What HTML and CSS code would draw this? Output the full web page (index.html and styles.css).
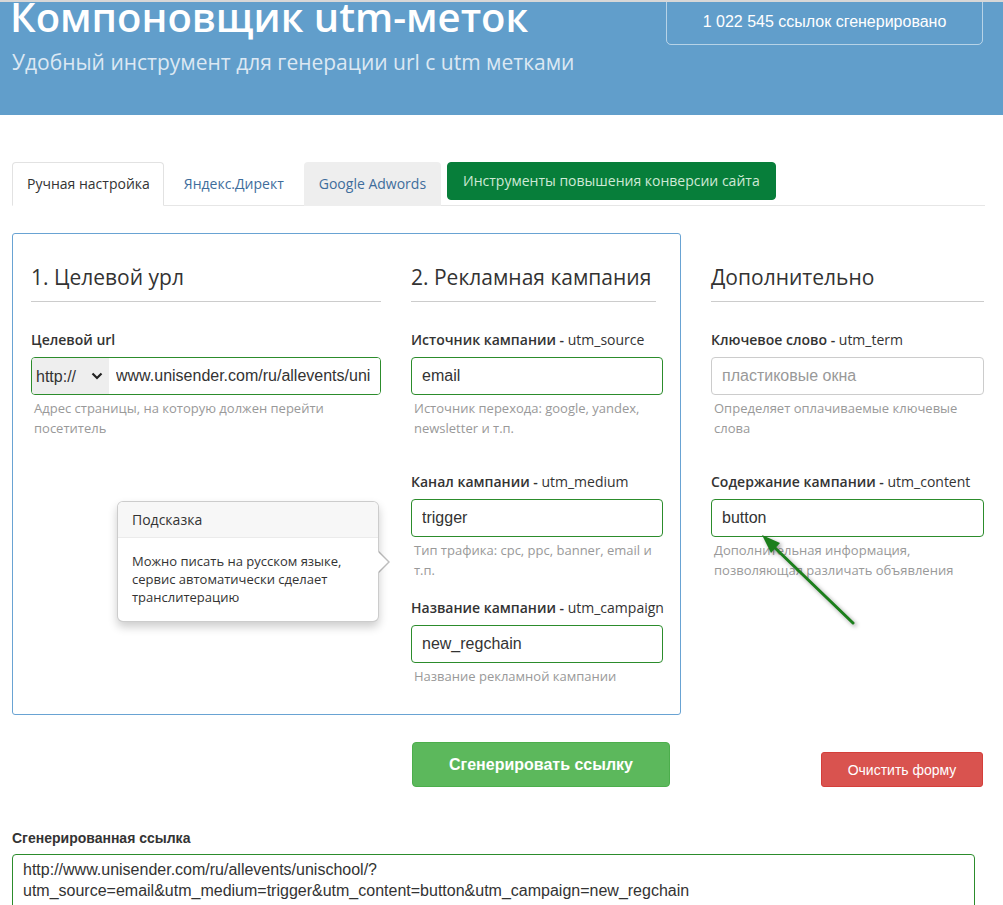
FILE: index.html
```html
<!DOCTYPE html>
<html lang="ru">
<head>
    <meta charset="UTF-8">
    <meta name="viewport" content="width=device-width, initial-scale=1.0">
    <title>Компоновщик utm-меток</title>
    <link rel="stylesheet" href="styles.css">
</head>
<body>
    <div class="topline"></div>
    <header class="hero">
        <div class="hero-text">
            <h1>Компоновщик utm-меток</h1>
            <p>Удобный инструмент для генерации url с utm метками</p>
        </div>
        <div class="counter">1 022 545 ссылок сгенерировано</div>
    </header>

    <div class="page">
        <div class="tabs">
            <a class="tab active">Ручная настройка</a>
            <a class="tab wide">Яндекс.Директ</a>
            <a class="tab muted">Google Adwords</a>
            <a class="tab-promo">Инструменты повышения конверсии сайта</a>
        </div>

        <div class="workspace">
            <div class="panel">
                <div class="col-main">
                    <h2 class="section-title">1. Целевой урл</h2>
                    <div class="field">
                        <label>Целевой url</label>
                        <div class="url-group">
                            <select class="proto">
                                <option>http://</option>
                                <option>https://</option>
                            </select>
                            <svg class="chevron" width="12" height="8" viewBox="0 0 12 8"><polyline points="1.5,1.5 6,6 10.5,1.5" fill="none" stroke="#222" stroke-width="2.2"/></svg>
                            <input type="text" class="url-input" value="www.unisender.com/ru/allevents/unischool/">
                        </div>
                        <div class="help">Адрес страницы, на которую должен перейти посетитель</div>
                    </div>
                </div>

                <div class="col-campaign">
                    <h2 class="section-title">2. Рекламная кампания</h2>
                    <div class="field field-tall">
                        <label>Источник кампании - <span class="key">utm_source</span></label>
                        <input type="text" class="input" value="email">
                        <div class="help">Источник перехода: google, yandex, newsletter и т.п.</div>
                    </div>
                    <div class="field">
                        <label>Канал кампании - <span class="key">utm_medium</span></label>
                        <input type="text" class="input" value="trigger">
                        <div class="help">Тип трафика: cpc, ppc, banner, email и т.п.</div>
                    </div>
                    <div class="field">
                        <label>Название кампании - <span class="key">utm_campaign</span></label>
                        <input type="text" class="input" value="new_regchain">
                        <div class="help">Название рекламной кампании</div>
                    </div>
                </div>

                <div class="popover">
                    <div class="popover-title">Подсказка</div>
                    <div class="popover-body">Можно писать на русском языке, сервис автоматически сделает транслитерацию</div>
                </div>
            </div>

            <div class="col-extra">
                <h2 class="section-title">Дополнительно</h2>
                <div class="field field-tall">
                    <label>Ключевое слово - <span class="key">utm_term</span></label>
                    <input type="text" class="input input-plain" placeholder="пластиковые окна">
                    <div class="help">Определяет оплачиваемые ключевые слова</div>
                </div>
                <div class="field">
                    <label>Содержание кампании - <span class="key">utm_content</span></label>
                    <input type="text" class="input" value="button">
                    <div class="help">Дополнительная информация, позволяющая различать объявления</div>
                </div>
            </div>
        </div>

        <div class="actions">
            <button class="btn-generate">Сгенерировать ссылку</button>
            <button class="btn-clear">Очистить форму</button>
        </div>

        <div class="result">
            <label>Сгенерированная ссылка</label>
            <textarea class="result-box">http://www.unisender.com/ru/allevents/unischool/?
utm_source=email&amp;utm_medium=trigger&amp;utm_content=button&amp;utm_campaign=new_regchain</textarea>
        </div>
    </div>

    <!-- annotation arrow -->
    <svg class="pointer" width="130" height="120" viewBox="0 0 130 120">
        <line x1="33" y1="26" x2="113" y2="103" stroke="#1c7f1c" stroke-width="3" stroke-linecap="round"/>
        <polygon points="22,15 40,23 31,33" fill="#1c7f1c"/>
    </svg>
</body>
</html>
```

FILE: styles.css
```css
body {
    margin: 0;
    font-family: "Open Sans", sans-serif;
    color: #333;
    position: relative;
}
.topline {
    height: 2px;
    background: #d7d7d7;
}
.hero {
    height: 113px;
    background: #619ecb;
    display: flex;
    justify-content: space-between;
    align-items: flex-start;
    overflow: hidden;
}
.hero-text {
    padding-left: 10px;
}
.hero h1 {
    margin: -9px 0 0;
    font-size: 40px;
    line-height: 48px;
    font-weight: 600;
    color: #fff;
}
.hero p {
    margin: 7px 0 0 2px;
    font-size: 21px;
    line-height: 28px;
    color: #dce8f3;
}
.counter {
    margin: -1px 20px 0 0;
    width: 315px;
    padding: 10px 0 12px;
    border: 1px solid rgba(255, 255, 255, 0.55);
    border-radius: 0 0 5px 5px;
    text-align: center;
    font-family: "Liberation Sans", Arial, sans-serif;
    font-size: 16px;
    line-height: 20px;
    color: #fff;
}
.page {
    padding: 47px 18px 0 12px;
}

/* tabs */
.tabs {
    display: flex;
    align-items: flex-start;
    border-bottom: 1px solid #e6e6e6;
    font-size: 14px;
}
.tab {
    padding: 11px 14px;
    line-height: 20px;
    margin: 0 1px -1px 0;
    border: 1px solid transparent;
    border-radius: 4px 4px 0 0;
    color: #3e6d9c;
    white-space: nowrap;
    cursor: pointer;
}
.tab.active {
    padding: 11px 13px 11px 14px;
    background: #fff;
    color: #333;
    border-color: #e2e2e2 #e2e2e2 #fff;
}
.tab.wide {
    padding: 11px 18px;
    margin-right: 1px;
}
.tab.muted {
    background: #eee;
    margin-right: 6px;
}
.tab-promo {
    padding: 8px 15px;
    line-height: 20px;
    border: 1px solid #077e3a;
    border-radius: 4px;
    background: #077e3a;
    color: #cfe9d6;
    white-space: nowrap;
    cursor: pointer;
}

/* form */
.workspace {
    display: flex;
    align-items: flex-start;
    margin-top: 27px;
}
.panel {
    position: relative;
    display: flex;
    padding: 28px 17px 28px 18px;
    border: 1px solid #69a3d3;
    border-radius: 3px;
}
.col-main {
    width: 350px;
}
.col-campaign {
    width: 252px;
    margin-left: 30px;
}
.col-campaign .section-title {
    margin-right: 7px;
}
.col-extra {
    width: 273px;
    margin-left: 30px;
    padding-top: 29px;
}
.section-title {
    margin: 0 0 28px;
    padding-bottom: 9px;
    border-bottom: 1px solid #ccc;
    font-size: 21px;
    line-height: 30px;
    font-weight: 400;
    white-space: nowrap;
}
.field {
    margin-bottom: 18px;
}
.field-tall {
    margin-bottom: 34px;
}
.field:last-child {
    margin-bottom: 0;
}
.field label {
    display: block;
    margin-bottom: 7px;
    font-size: 14px;
    line-height: 20px;
    font-weight: 600;
    white-space: nowrap;
}
.field .key {
    font-weight: 400;
}
.input {
    display: block;
    box-sizing: border-box;
    width: 100%;
    height: 38px;
    padding: 0 10px;
    border: 1px solid #2c8c2c;
    border-radius: 4px;
    font-family: "Liberation Sans", Arial, sans-serif;
    font-size: 16px;
    color: #333;
    outline: none;
}
.input-plain {
    border-color: #ccc;
}
.input-plain::placeholder {
    color: #999;
}
.url-group {
    position: relative;
    display: flex;
    box-sizing: border-box;
    height: 38px;
    border: 1px solid #2c8c2c;
    border-radius: 4px;
    overflow: hidden;
}
.proto {
    appearance: none;
    width: 77px;
    padding-left: 4px;
    border: 0;
    background: #eee;
    font-family: "Liberation Sans", Arial, sans-serif;
    font-size: 16px;
    color: #333;
    outline: none;
}
.chevron {
    position: absolute;
    left: 59px;
    top: 14px;
    pointer-events: none;
}
.url-input {
    flex: 1;
    min-width: 0;
    padding: 0 10px 0 7px;
    border: 0;
    font-family: "Liberation Sans", Arial, sans-serif;
    font-size: 16px;
    color: #333;
    outline: none;
}
.help {
    margin: 3px 0 0 3px;
    font-size: 13px;
    line-height: 20px;
    color: #999;
}

/* hint */
.popover {
    position: absolute;
    left: 104px;
    top: 267px;
    width: 260px;
    background: #fff;
    border: 1px solid rgba(0, 0, 0, 0.2);
    border-radius: 6px;
    box-shadow: 0 5px 10px rgba(0, 0, 0, 0.2);
}
.popover::before,
.popover::after {
    content: "";
    position: absolute;
    top: 50%;
    border-style: solid;
    border-color: transparent;
}
.popover::before {
    right: -23px;
    margin-top: -11px;
    border-width: 11px;
    border-left-color: rgba(0, 0, 0, 0.25);
}
.popover::after {
    right: -20px;
    margin-top: -10px;
    border-width: 10px;
    border-left-color: #fff;
}
.popover-title {
    padding: 8px 14px;
    font-size: 14px;
    line-height: 19px;
    background: #f7f7f7;
    border-bottom: 1px solid #ebebeb;
    border-radius: 5px 5px 0 0;
}
.popover-body {
    padding: 14px 14px 15px;
    font-size: 13px;
    line-height: 18px;
}

/* buttons */
.actions {
    display: flex;
    align-items: flex-start;
    margin-top: 27px;
}
.btn-generate {
    margin-left: 400px;
    width: 258px;
    height: 45px;
    background: #5cb85c;
    border: 1px solid #4cae4c;
    border-radius: 4px;
    color: #fff;
    font-family: "Liberation Sans", Arial, sans-serif;
    font-size: 16px;
    font-weight: bold;
    cursor: pointer;
}
.btn-clear {
    margin: 10px 2px 0 auto;
    width: 162px;
    height: 35px;
    background: #d9534f;
    border: 1px solid #d43f3a;
    border-radius: 3px;
    color: #fff;
    font-family: "Liberation Sans", Arial, sans-serif;
    font-size: 14px;
    cursor: pointer;
}

/* result */
.result {
    margin-top: 41px;
}
.result label {
    display: block;
    margin-bottom: 6px;
    font-family: "Liberation Sans", Arial, sans-serif;
    font-size: 14px;
    line-height: 20px;
    font-weight: bold;
    color: #333;
}
.result-box {
    display: block;
    box-sizing: border-box;
    width: 963px;
    height: 74px;
    padding: 4px 10px;
    border: 1px solid #2c8c2c;
    border-radius: 4px;
    font-family: "Liberation Sans", Arial, sans-serif;
    font-size: 16px;
    line-height: 21px;
    color: #333;
    resize: none;
    outline: none;
}

.pointer {
    position: absolute;
    left: 740px;
    top: 520px;
    filter: drop-shadow(2px 2px 2px rgba(0, 0, 0, 0.4));
}
```
